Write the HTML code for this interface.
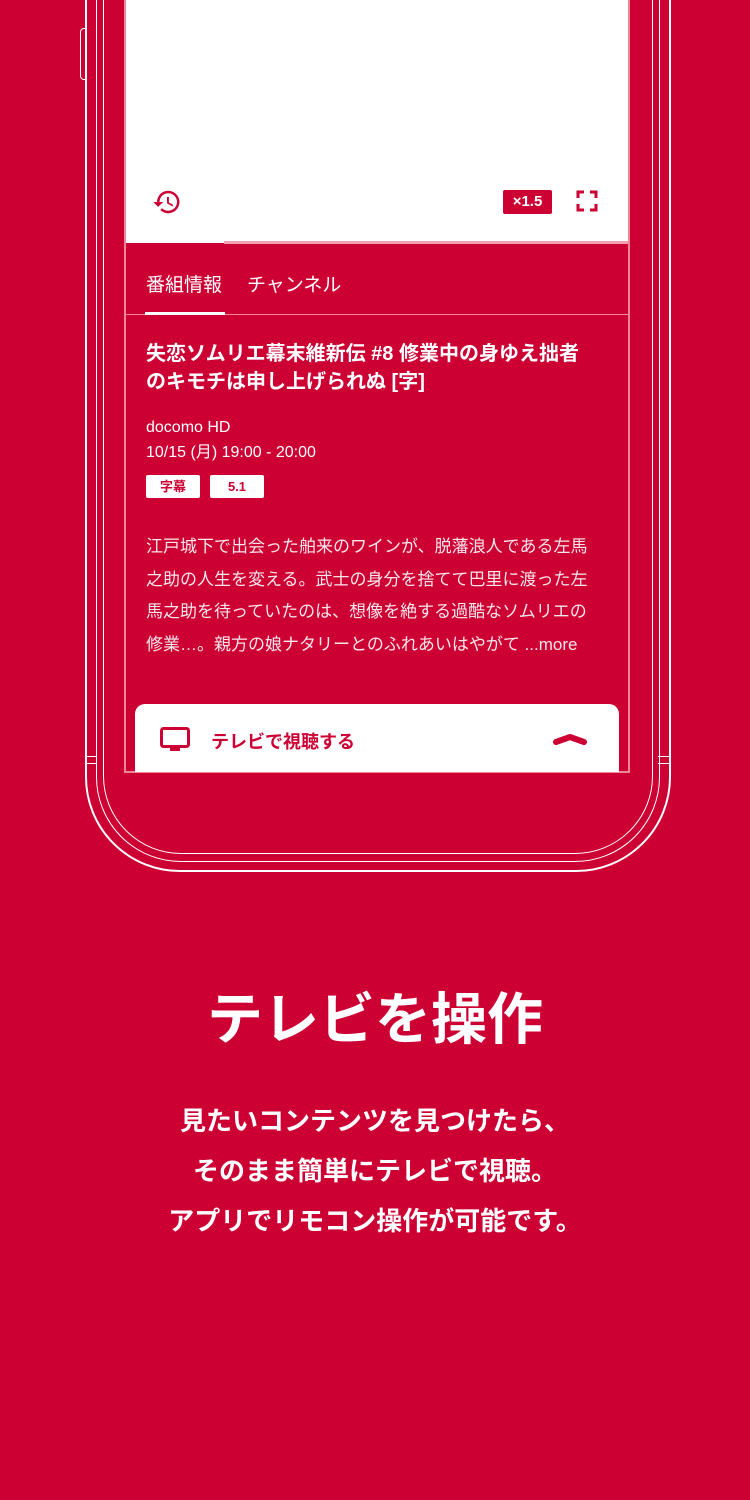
<!DOCTYPE html>
<html><head><meta charset="utf-8"><style>
*{margin:0;padding:0;box-sizing:border-box}
body{width:750px;height:1500px;background:#cc0033;position:relative;overflow:hidden;font-family:"Liberation Sans","Noto Sans CJK JP",sans-serif;color:#fff}
.abs{position:absolute}
.line{position:absolute;border:2px solid #fff}
</style></head><body>
<div class="line" style="left:85px;top:-60px;width:586px;height:932px;border-radius:0 0 95px 95px"></div>
<div class="line" style="left:96px;top:-60px;width:564px;height:922px;border-width:1.5px;border-radius:0 0 85px 85px"></div>
<div class="line" style="left:103px;top:-60px;width:550px;height:914px;border-width:1.5px;border-radius:0 0 78px 78px"></div>
<div class="abs" style="left:80px;top:28px;width:6px;height:52px;border:1.5px solid #fff;border-right:none;border-radius:4px 0 0 4px"></div>
<div class="abs" style="left:86px;top:756px;width:11px;height:8px;border-top:1.5px solid #fff;border-bottom:1.5px solid #fff"></div>
<div class="abs" style="left:658px;top:756px;width:11px;height:8px;border-top:1.5px solid #fff;border-bottom:1.5px solid #fff"></div>
<div class="abs" style="left:124px;top:0;width:506px;height:773px;background:#cc0033;border:2px solid #ee8899;border-top:none"></div>
<div class="abs" style="left:126px;top:0;width:502px;height:243px;background:#fff"></div>
<div class="abs" style="left:224px;top:241px;width:404px;height:3px;background:#eea0b0"></div>
<svg class="abs" style="left:151px;top:187px" width="32" height="30" viewBox="0 0 24 24"><path fill="#cc0033" d="M13 3a9 9 0 0 0-9 9H1l3.9 3.9L9 12H6a7 7 0 1 1 2.05 4.95l-1.42 1.42A9 9 0 1 0 13 3zm-1 5v5l4.28 2.54.72-1.21-3.5-2.08V8H12z"/></svg>
<div class="abs" style="left:503px;top:190px;width:49px;height:24px;background:#cc0033;border-radius:2px;font-size:15px;font-weight:bold;text-align:center;line-height:24px">×1.5</div>
<svg class="abs" style="left:576px;top:190px" width="22" height="22" viewBox="0 0 22 22" fill="none" stroke="#cc0033" stroke-width="3"><path d="M2 8V2h6M14 2h6v6M20 14v6h-6M8 20H2v-6"/></svg>
<div class="abs" style="left:146px;top:270px;font-size:19px">番組情報</div>
<div class="abs" style="left:247px;top:270px;font-size:19px">チャンネル</div>
<div class="abs" style="left:126px;top:314px;width:502px;height:1px;background:#ee8899"></div>
<div class="abs" style="left:145px;top:312px;width:80px;height:3px;background:#fff"></div>
<div class="abs" style="left:146px;top:340px;width:470px;font-size:20px;font-weight:bold;line-height:28px">失恋ソムリエ幕末維新伝 #8 修業中の身ゆえ拙者<br>のキモチは申し上げられぬ [字]</div>
<div class="abs" style="left:146px;top:415px;font-size:16px;line-height:25px">docomo HD<br>10/15 (月) 19:00 - 20:00</div>
<div class="abs" style="left:146px;top:475px;width:54px;height:23px;background:#fff;color:#cc0033;border-radius:2px;font-size:13px;font-weight:bold;text-align:center;line-height:23px">字幕</div>
<div class="abs" style="left:210px;top:475px;width:54px;height:23px;background:#fff;color:#cc0033;border-radius:2px;font-size:13px;font-weight:bold;text-align:center;line-height:23px">5.1</div>
<div class="abs" style="left:146px;top:531px;width:452px;font-size:17px;line-height:32.5px;color:#fbe6ea">江戸城下で出会った舶来のワインが、脱藩浪人である左馬之助の人生を変える。武士の身分を捨てて巴里に渡った左馬之助を待っていたのは、想像を絶する過酷なソムリエの修業…。親方の娘ナタリーとのふれあいはやがて ...more</div>
<div class="abs" style="left:135px;top:704px;width:484px;height:68px;background:#fff;border-radius:10px 10px 0 0"></div>
<svg class="abs" style="left:160px;top:727px" width="30" height="26" viewBox="0 0 30 26"><rect x="1.5" y="1.5" width="27" height="18" rx="2" fill="none" stroke="#cc0033" stroke-width="3"/><rect x="10" y="21" width="10" height="3" fill="#cc0033"/></svg>
<div class="abs" style="left:211px;top:728px;font-size:18px;font-weight:bold;color:#cc0033">テレビで視聴する</div>
<svg class="abs" style="left:552px;top:732px" width="36" height="14" viewBox="0 0 36 14"><path d="M4 10L18 5L32 10" fill="none" stroke="#cc0033" stroke-width="6" stroke-linecap="round" stroke-linejoin="round"/></svg>
<div class="abs" style="left:0;top:975px;width:750px;text-align:center;font-size:56px;font-weight:bold">テレビを操作</div>
<div class="abs" style="left:0;top:1096px;width:750px;text-align:center;font-size:26px;font-weight:bold;line-height:50px">見たいコンテンツを見つけたら、<br>そのまま簡単にテレビで視聴。<br>アプリでリモコン操作が可能です。</div>
</body></html>
